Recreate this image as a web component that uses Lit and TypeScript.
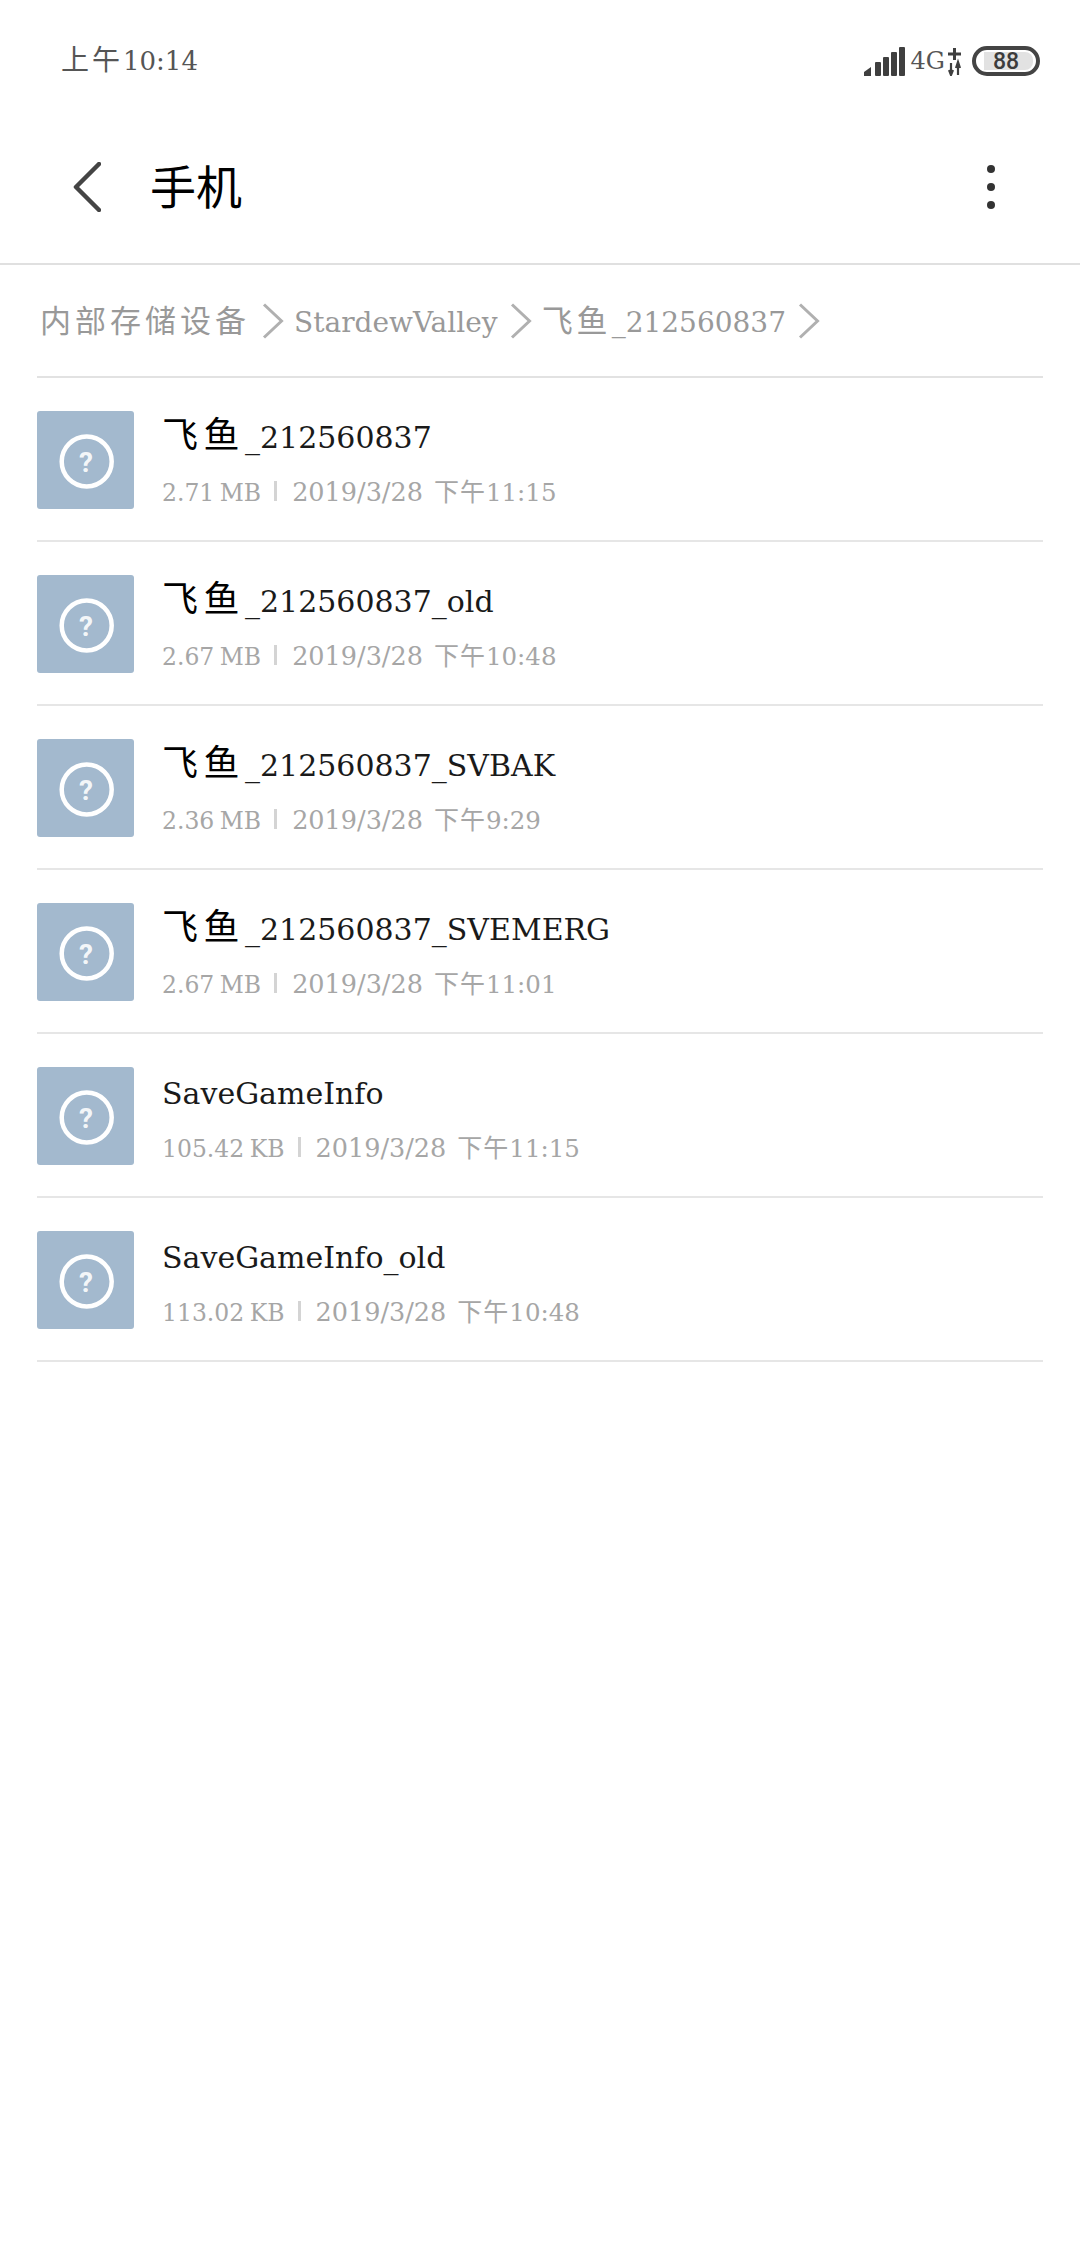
import { LitElement, html, css, svg } from "lit";
import { customElement } from "lit/decorators.js";

const rows = [
  ["飞鱼", "_212560837", "2.71 MB", "2019/3/28", "下午", "11:15"],
  ["飞鱼", "_212560837_old", "2.67 MB", "2019/3/28", "下午", "10:48"],
  ["飞鱼", "_212560837_SVBAK", "2.36 MB", "2019/3/28", "下午", "9:29"],
  ["飞鱼", "_212560837_SVEMERG", "2.67 MB", "2019/3/28", "下午", "11:01"],
  ["", "SaveGameInfo", "105.42 KB", "2019/3/28", "下午", "11:15"],
  ["", "SaveGameInfo_old", "113.02 KB", "2019/3/28", "下午", "10:48"],
];
const crumbChevron = html`<svg class="chev" width="22" height="36" viewBox="0 0 22 36"><path d="M2 1.5 L19.5 18 L2 34.5" fill="none" stroke="#b0b0b0" stroke-width="3"/></svg>`;

@customElement("app-root")
export class AppRoot extends LitElement {
  static styles = css`
    :host { display: block; width: 1080px; height: 2248px; background: #fff; overflow: hidden;
      font-family: "DejaVu Serif", "Noto Sans CJK SC", serif; }
    .cjk { font-family: "Noto Sans CJK SC", sans-serif; }
    .status { height: 90px; padding: 26px 40px 0 61px; box-sizing: border-box; display: flex; justify-content: space-between; align-items: center; }
    .time { font-size: 26px; color: #555; }
    .time .cjk { font-size: 28px; letter-spacing: 3px; }
    .sys { display: flex; align-items: center; margin-top: 6px; }
    .net { font-size: 24px; color: #555; margin: 0 3px 0 6px; }
    .bat { position: relative; width: 68px; height: 30px; margin-left: 10px; box-sizing: border-box; border: 4px solid #444; border-radius: 15px; display: flex; align-items: center; justify-content: center; }
    .bat i { position: absolute; left: 8px; right: 3px; top: 2px; bottom: 2px; background: #e2e2e2; border-radius: 0 8px 8px 0; }
    .bat span { position: relative; font: 500 23px "Roboto", sans-serif; color: #3c3c3c; }
    .bar { height: 175px; box-sizing: border-box; border-bottom: 2px solid #e0e0e0; display: flex; align-items: center; padding: 20px 85px 0 73px; }
    .title { font-size: 46px; color: #000; margin: 0 0 6px 49px; flex: 1; line-height: 1; }
    .crumbs { height: 113px; margin: 0 37px; box-sizing: border-box; border-bottom: 2px solid #e2e2e2; display: flex; align-items: baseline; color: #999; font-size: 28px; padding: 31px 0 0 3px; white-space: nowrap; }
    .crumbs .chev { margin: 0 10px 0 12px; align-self: center; position: relative; top: -15px; }
    .crumbs .cjk { font-size: 31px; letter-spacing: 4px; }
    .list { margin: 0 37px; }
    .row { height: 164px; box-sizing: border-box; border-bottom: 2px solid #e6e6e6; display: flex; align-items: center; padding-top: 1px; }
    .icon { width: 97px; height: 98px; background: #a3b9ce; border-radius: 3px; display: flex; align-items: center; justify-content: center; flex: none; }
    .icon svg { overflow: visible; }
    .txt { margin-left: 28px; padding-top: 1px; display: flex; flex-direction: column; gap: 12px; white-space: nowrap; }
    .name { font-size: 30px; color: #1a1a1a; line-height: 44px; }
    .name .cjk { font-size: 36px; letter-spacing: 5.5px; color: #000; }
    .sub { font-size: 25.5px; color: #a6a6a6; line-height: 36px; display: flex; align-items: baseline; }
    .sub .size { font-size: 23.5px; word-spacing: -2px; }
    .sub .cjk { font-size: 25px; letter-spacing: 1px; }
    .sep { width: 3px; height: 20px; background: #d4d4d4; margin: 0 15px 0 13px; align-self: center; }
    .sub .t { margin-left: 11px; font-size: 24.5px; }
  `;
  render() {
    return html`
      <div class="status">
        <span class="time"><span class="cjk">上午</span>10:14</span>
        <div class="sys">
          <svg width="41" height="29" viewBox="0 0 41 29">
            <path d="M0 29 V25 L7 20 V29Z" fill="#3f3f3f"/>
            <rect x="11" y="15" width="6" height="14" fill="#3f3f3f" rx="1"/>
            <rect x="19" y="10" width="6" height="19" fill="#3f3f3f" rx="1"/>
            <rect x="27" y="5" width="6" height="24" fill="#3f3f3f" rx="1"/>
            <rect x="35" y="0" width="6" height="29" fill="#3f3f3f" rx="1"/>
          </svg>
          <span class="net">4G</span>
          <svg width="14" height="29" viewBox="0 0 14 29">
            <path d="M0 7H13M6.5 1V13" stroke="#3f3f3f" stroke-width="3" fill="none"/>
            <path d="M3 16V26M1 23L3 28L5 23M10 28V18M8 21L10 15L12 21" stroke="#3f3f3f" stroke-width="2.2" fill="none"/>
          </svg>
          <div class="bat"><i></i><span>88</span></div>
        </div>
      </div>
      <div class="bar">
        <svg width="28" height="50" viewBox="0 0 28 50"><path d="M26 2 L3 25 L26 48" fill="none" stroke="#444" stroke-width="4.5" stroke-linecap="round" stroke-linejoin="round"/></svg>
        <span class="title cjk">手机</span>
        <svg width="8" height="44" viewBox="0 0 8 44"><circle cx="4" cy="4" r="4" fill="#333"/><circle cx="4" cy="22" r="4" fill="#333"/><circle cx="4" cy="40" r="4" fill="#333"/></svg>
      </div>
      <div class="crumbs">
        <span class="cjk">内部存储设备</span>${crumbChevron}<span>StardewValley</span>${crumbChevron}<span><span class="cjk">飞鱼</span>_212560837</span>${crumbChevron}
      </div>
      <div class="list">
        ${rows.map(r => html`
          <div class="row">
            <div class="icon">
              <svg width="54" height="54" viewBox="0 0 54 54">
                <circle cx="27.7" cy="28.5" r="25" fill="none" stroke="#fff" stroke-width="4.5"/>
                ${svg`<text x="27" y="39" text-anchor="middle" font-family="Roboto, sans-serif" font-weight="700" font-size="28" fill="#fff" fill-opacity="0.9">?</text>`}
              </svg>
            </div>
            <div class="txt">
              <span class="name"><span class="cjk">${r[0]}</span>${r[1]}</span>
              <span class="sub"><span class="size">${r[2]}</span><i class="sep"></i><span>${r[3]}</span><span class="t"><span class="cjk">${r[4]}</span>${r[5]}</span></span>
            </div>
          </div>`)}
      </div>
    `;
  }
}
